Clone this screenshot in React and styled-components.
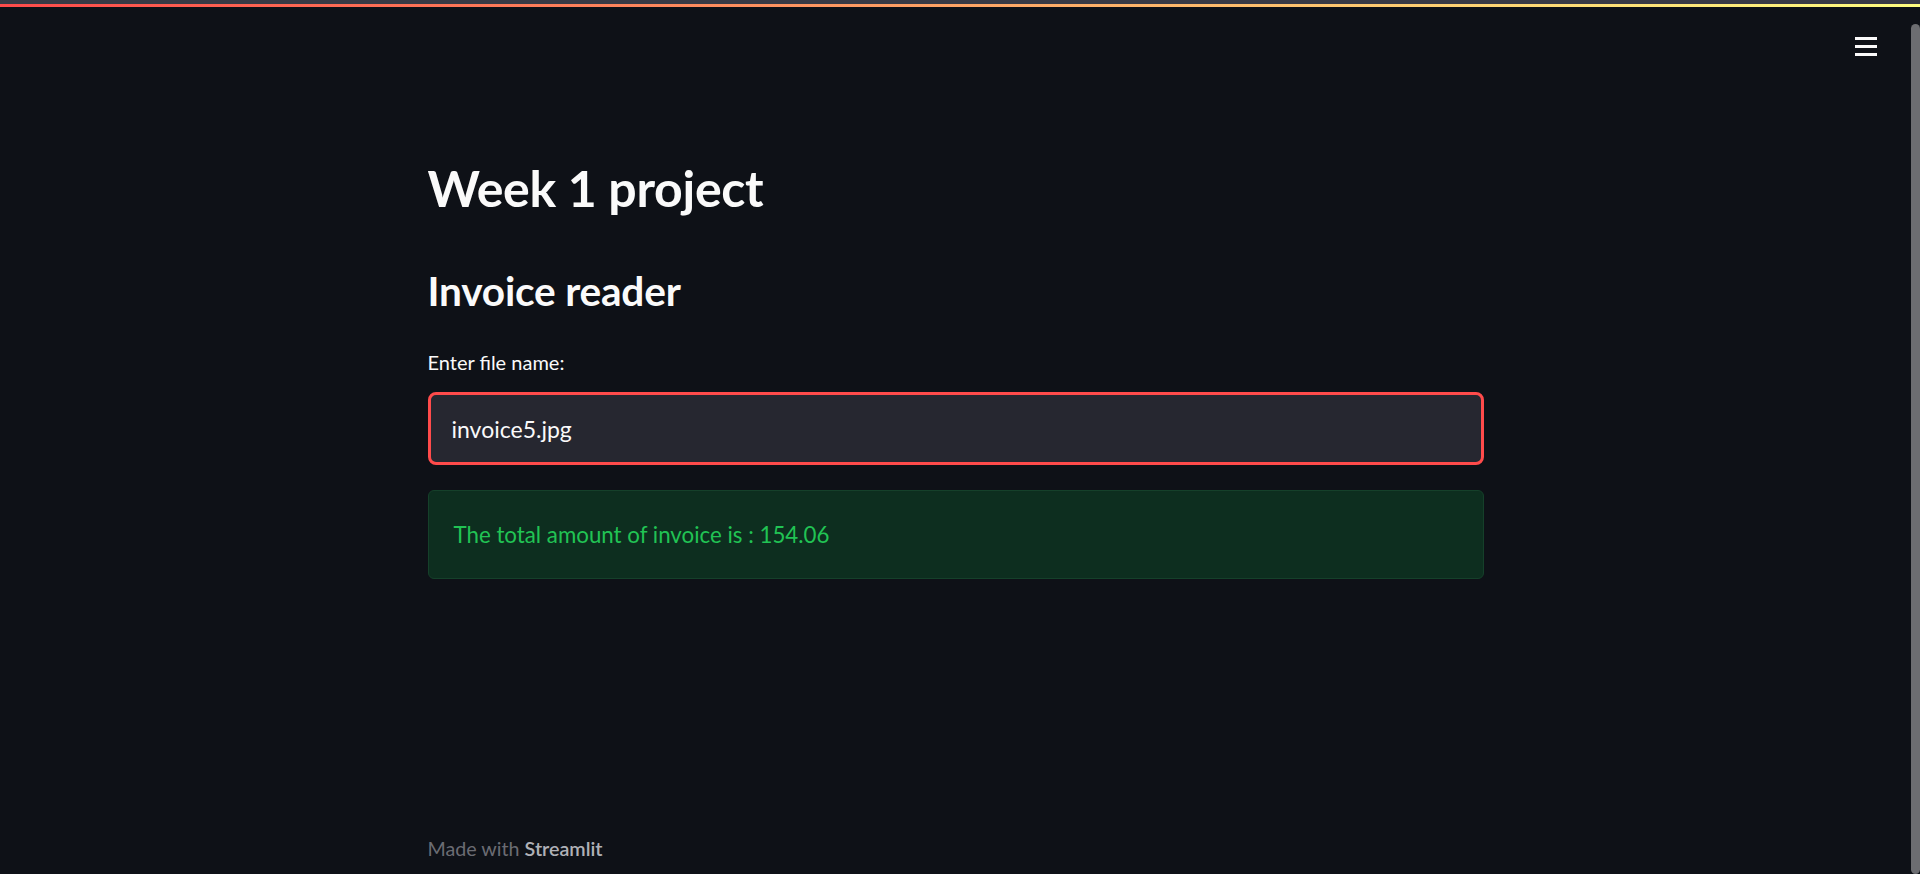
import React from "react";
import styled, { createGlobalStyle } from "styled-components";

const GlobalStyle = createGlobalStyle`
  html, body {
    margin: 0;
    padding: 0;
    background: #0e1117;
    overflow: hidden;
  }
  * {
    box-sizing: border-box;
  }
`;

function App() {
  return (
    <>
      <GlobalStyle />
      <Header>
        <Decoration />
        <MenuButton aria-label="menu">
          <Bar />
          <Bar />
          <Bar />
        </MenuButton>
      </Header>
      <Shell>
        <Main>
          <Page>
            <Block>
              <Title>Week 1 project</Title>
              <Subtitle>Invoice reader</Subtitle>
              <Label htmlFor="file">Enter file name:</Label>
              <Input id="file" defaultValue="invoice5.jpg" />
              <Success>The total amount of invoice is : 154.06</Success>
            </Block>
            <Footer>
              Made with <strong>Streamlit</strong>
            </Footer>
          </Page>
        </Main>
        {/* page is scrolled to the bottom, thumb sits low in the rail */}
        <ScrollRail>
          <Thumb />
        </ScrollRail>
      </Shell>
    </>
  );
}

export default App;

const Header = styled.header`
  position: fixed;
  top: 0;
  left: 0;
  right: 0;
  z-index: 10;
  border-top: 4px solid #393a45;
`;

const Decoration = styled.div`
  height: 3px;
  background: linear-gradient(90deg, #ff4b4b, #fffd80);
`;

const MenuButton = styled.button`
  position: absolute;
  top: 33px;
  right: 43px;
  width: 22px;
  padding: 0;
  border: none;
  background: transparent;
  display: flex;
  flex-direction: column;
  gap: 5px;
  cursor: pointer;
`;

const Bar = styled.span`
  display: block;
  height: 3px;
  width: 22px;
  background: #fafafa;
`;

const Shell = styled.div`
  display: flex;
  height: 100vh;
  background: #0e1117;
`;

const Main = styled.main`
  flex: 1;
  color: #fafafa;
  font-family: Lato, "Noto Sans", sans-serif;
`;

const ScrollRail = styled.div`
  width: 9px;
  display: flex;
  flex-direction: column;
  padding-top: 24px;
`;

const Thumb = styled.div`
  flex: 1;
  background: #6c6d71;
  border-radius: 5px;
`;

const Page = styled.div`
  width: 1056px;
  min-height: 874px;
  margin: 0 auto;
  display: flex;
  flex-direction: column;
`;

const Block = styled.div`
  flex: 1;
  display: flex;
  flex-direction: column;
  padding-top: 158px;
`;

const Title = styled.h1`
  margin: 0;
  font-size: 50px;
  line-height: 60px;
  font-weight: 700;
  letter-spacing: -0.3px;
`;

const Subtitle = styled.h2`
  margin: 49px 0 0;
  font-size: 40.6px;
  line-height: 48px;
  font-weight: 700;
  letter-spacing: -0.2px;
`;

const Label = styled.label`
  margin-top: 35px;
  font-size: 20px;
  line-height: 24px;
`;

const Input = styled.input`
  margin-top: 18px;
  height: 73px;
  width: 100%;
  padding: 0 21px;
  border: 3px solid #ff4b4b;
  border-radius: 8px;
  background: #262730;
  color: #fafafa;
  font-family: inherit;
  font-size: 23px;
  outline: none;
`;

const Success = styled.div`
  margin-top: 25px;
  height: 89px;
  display: flex;
  align-items: center;
  padding: 0 25px;
  border: 1px solid #15402a;
  border-radius: 6px;
  background: #0d2e1f;
  color: #21c354;
  font-size: 22.3px;
`;

const Footer = styled.footer`
  padding-bottom: 13px;
  font-size: 19.7px;
  line-height: 24px;
  color: #6b6c73;

  strong {
    font-weight: 600;
    color: #b0b1b7;
  }
`;
